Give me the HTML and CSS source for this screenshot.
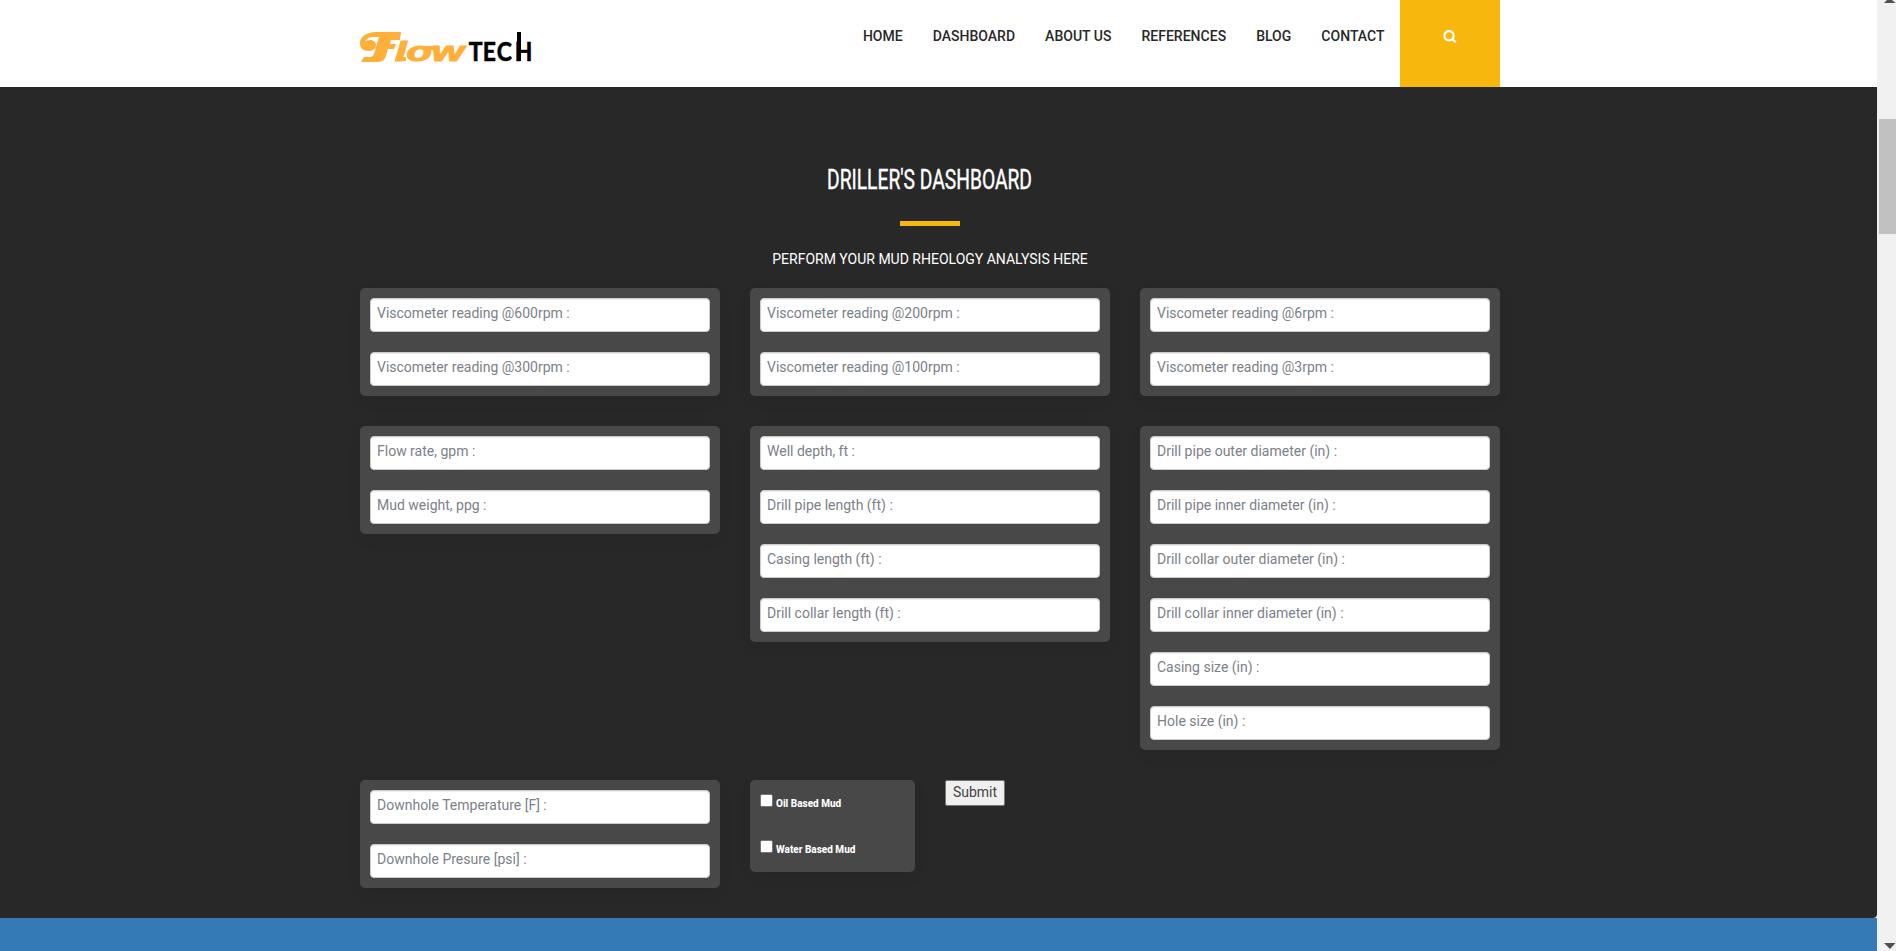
FILE: index.html
```html
<!DOCTYPE html>
<html lang="en">
<head>
<meta charset="utf-8">
<title>FlowTech</title>
<link rel="stylesheet" href="styles.css">
</head>
<body>
<div class="page">
  <header class="header">
    <div class="container header-inner">
      <svg class="logo" width="176" height="36" viewBox="0 0 176 36" role="img" aria-label="FlowTech">
        <g class="logo-flow">
          <path d="M41 0H16C6 0 0 5 0 11c0 5 3 8 8 8 4 0 8-2 8-6 0-3-3-5-6-5-2 0-4 1-5 2 1-3 4-5 9-5h5l-5 17c-1 2-2 3-4 3H4l-3 5h17c5 0 7-3 8-6l2-7h6l2-5h-6l1-4h9z"/>
          <text x="35" y="29" textLength="69" lengthAdjust="spacingAndGlyphs">low</text>
          <path d="M36 25h10v4H35zM62 14h15l-1 4H62z"/>
        </g>
        <g class="logo-tech">
          <text transform="scale(.88 1)" x="123.500 139.500 155.500 176" y="29">TECH</text>
          <path d="M157 0h4v29h-4z"/>
        </g>
      </svg>
      <nav class="nav">
        <a>HOME</a><a>DASHBOARD</a><a>ABOUT US</a><a>REFERENCES</a><a>BLOG</a><a>CONTACT</a>
        <a class="search" aria-label="Search"><svg width="14" height="14" viewBox="0 0 14 14"><circle cx="6" cy="5.700" r="4.600"/><path d="M9.200 9l3.600 3.300"/></svg></a>
      </nav>
    </div>
  </header>
  <main class="dashboard">
    <div class="container">
      <h1 class="title"><svg width="300" height="40" viewBox="0 0 300 40"><text x="47" y="29" textLength="205" lengthAdjust="spacingAndGlyphs">DRILLER'S DASHBOARD</text></svg></h1>
      <div class="rule"></div>
      <p class="subtitle">PERFORM YOUR MUD RHEOLOGY ANALYSIS HERE</p>
      <form class="form">
        <div class="card"><input placeholder="Viscometer reading @600rpm :"><input placeholder="Viscometer reading @300rpm :"></div>
        <div class="card"><input placeholder="Viscometer reading @200rpm :"><input placeholder="Viscometer reading @100rpm :"></div>
        <div class="card"><input placeholder="Viscometer reading @6rpm :"><input placeholder="Viscometer reading @3rpm :"></div>
        <div class="card"><input placeholder="Flow rate, gpm :"><input placeholder="Mud weight, ppg :"></div>
        <div class="card"><input placeholder="Well depth, ft :"><input placeholder="Drill pipe length (ft) :"><input placeholder="Casing length (ft) :"><input placeholder="Drill collar length (ft) :"></div>
        <div class="card"><input placeholder="Drill pipe outer diameter (in) :"><input placeholder="Drill pipe inner diameter (in) :"><input placeholder="Drill collar outer diameter (in) :"><input placeholder="Drill collar inner diameter (in) :"><input placeholder="Casing size (in) :"><input placeholder="Hole size (in) :"></div>
        <div class="card"><input placeholder="Downhole Temperature [F] :"><input placeholder="Downhole Presure [psi] :"></div>
        <div class="options">
          <div class="card mud">
            <label><span class="check"></span>Oil Based Mud</label>
            <label><span class="check"></span>Water Based Mud</label>
          </div>
          <button class="submit" type="button">Submit</button>
        </div>
      </form>
    </div>
  </main>
  <footer class="footer"></footer>
</div>
<aside class="scrollbar">
  <svg class="arrow" width="12" height="3" viewBox="0 0 12 3"><path d="M3 0h5l3.500 3H0z"/></svg>
  <div class="thumb"></div>
  <svg class="arrow" width="12" height="6" viewBox="0 0 12 6"><path d="M0 0h11.500L6 6z"/></svg>
</aside>
</body>
</html>
```
FILE: styles.css
```css
* { box-sizing: border-box; }
body {
  margin: 0;
  height: 951px;
  display: flex;
  overflow: hidden;
  background: #fff;
  font-family: Roboto, "Liberation Sans", sans-serif;
  font-size: 14px;
  line-height: 20px;
}
.page { width: 1877px; display: flex; flex-direction: column; }
.container { width: 1140px; margin-left: 360px; }
.header { height: 87px; }
.header-inner { display: flex; justify-content: space-between; }
.logo { margin-top: 32px; overflow: visible; }
.logo-flow { fill: #ffb03b; }
.logo-flow text {
  font: italic bold 28px "Liberation Sans", sans-serif;
  stroke: #ffb03b;
  stroke-width: 1.2px;
}
.logo-tech text {
  font: 700 26px Lato, sans-serif;
  stroke: #000;
  stroke-width: .6px;
}
.nav { display: flex; }
.nav a {
  padding: 26px 15px 0;
  color: #282828;
  font-weight: 500;
  letter-spacing: .015px;
}
.nav .search {
  width: 100px;
  height: 87px;
  margin-left: .5px;
  padding: 30px 0 0 43px;
  background: #f7b70d;
}
.search svg { display: block; fill: none; stroke: #fff; stroke-width: 2.3px; }
.dashboard {
  height: 831px;
  padding-top: 73px;
  background: #282828;
  border-bottom-right-radius: 4px;
}
.title { height: 40px; margin: 0; display: flex; justify-content: center; }
.title svg { overflow: visible; }
.title text {
  font: 400 27px Roboto, sans-serif;
  fill: #fff;
  stroke: #fff;
  stroke-width: .4px;
}
.rule { width: 60px; height: 5px; margin: 21px auto 0; background: #f7b70d; }
.subtitle { margin: 23px 0 19px; text-align: center; color: #fff; }
.form {
  display: grid;
  grid-template-columns: repeat(3, 360px);
  gap: 30px;
  align-items: start;
}
.card {
  display: flex;
  flex-direction: column;
  gap: 20px;
  padding: 10px;
  border-radius: 5px;
  background: #484848;
  box-shadow: 0 5px 15px rgba(0, 0, 0, .05);
}
.card input {
  width: 100%;
  height: 34px;
  padding: 2px 6px 6px;
  border: 1px solid #ccc;
  border-radius: 4px;
  background: #fff;
  box-shadow: inset 0 1px 1px rgba(0, 0, 0, .075);
  font: 400 14px/20px Roboto, sans-serif;
}
.card input::placeholder { color: #7b8188; opacity: 1; }
.options { display: flex; align-items: flex-start; gap: 30px; }
.mud { width: 165px; height: 92px; padding: 14px 10px 0; gap: 26px; }
.mud label {
  height: 20px;
  display: flex;
  gap: 3px;
  color: #fff;
  font-size: 10px;
  font-weight: 800;
}
.check {
  width: 13px;
  height: 13px;
  border: 1px solid #767676;
  border-radius: 2px;
  background: #fff;
}
.submit {
  width: 60px;
  height: 26px;
  padding: 0 0 2px;
  border: 1px solid #767676;
  border-radius: 2px;
  background: #efefef;
  color: #444;
  font: 400 14px/20px Roboto, sans-serif;
}
.footer { height: 33px; background: #337ab7; }
.scrollbar {
  width: 19px;
  display: flex;
  flex-direction: column;
  background: #f1f1f1;
}
.thumb { width: 17px; height: 115px; margin: 116px 0 709px 2px; background: #c1c1c1; }
.arrow { display: block; flex: none; margin-left: 7px; fill: #505050; }
```
